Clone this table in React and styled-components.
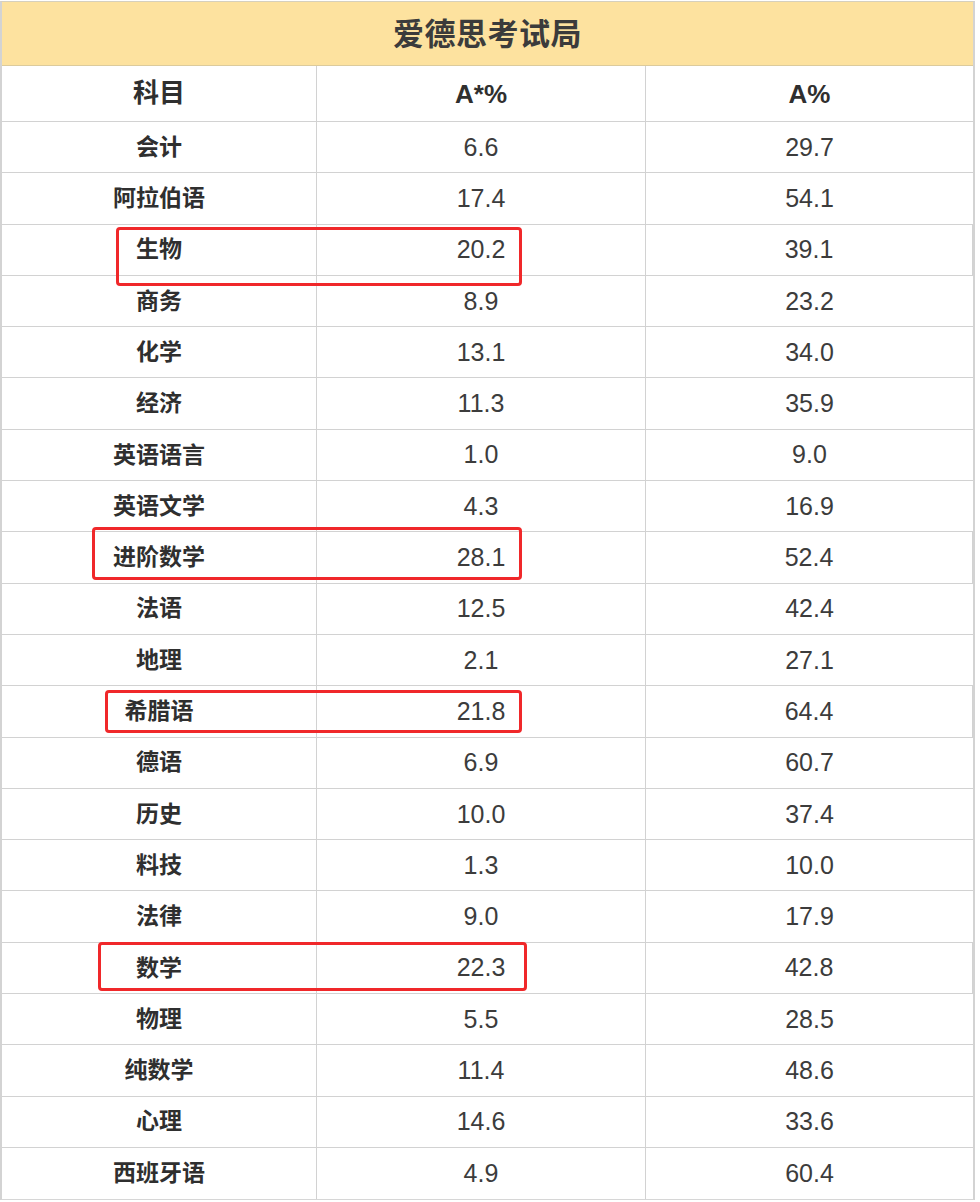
import React from "react";
import styled, { createGlobalStyle } from "styled-components";

const GlobalStyle = createGlobalStyle`
  html, body { margin: 0; padding: 0; background: #ffffff; }
  body { font-family: "Liberation Sans", "Noto Sans CJK SC", sans-serif; }
`;

const Page = styled.div`
  width: 980px;
  padding-top: 1px;
`;

const Table = styled.div`
  width: 971px;
  border-left: 2px solid #d3d3d3;
  border-right: 2px solid #d3d3d3;
  border-top: 1px solid #d6d0bd;
  border-bottom: 1px solid #d6d6d6;
`;

const Title = styled.div`
  height: 64px;
  box-sizing: border-box;
  padding-bottom: 5px;
  background: #fde29f;
  border-bottom: 1px solid #dccb9c;
  display: flex;
  align-items: center;
  justify-content: center;
  font-family: "Noto Sans CJK SC", sans-serif;
  font-weight: 700;
  font-size: 31px;
  line-height: 1;
  color: #3b3b3b;
  letter-spacing: 0.5px;
`;

const Row = styled.div`
  position: relative;
  display: grid;
  grid-template-columns: 315px 329px 327px;
  height: ${(p) => p.$h}px;
  box-sizing: border-box;
  border-bottom: 1px solid #d2d2d2;
  &:last-child { border-bottom: none; }
`;

const Cell = styled.div`
  display: flex;
  align-items: center;
  justify-content: center;
  box-sizing: border-box;
  line-height: 1;
  border-right: 1px solid #d2d2d2;
  &:last-child { border-right: none; }
  padding-bottom: ${(p) => (p.$cjk ? "0.16em" : "0")};
  font-family: ${(p) =>
    p.$cjk ? `"Noto Sans CJK SC", sans-serif` : `"Liberation Sans", "Noto Sans CJK SC", sans-serif`};
  font-weight: ${(p) => (p.$bold ? 700 : 400)};
  font-size: ${(p) => p.$size}px;
  color: ${(p) => (p.$bold ? "#2f2f2f" : "#3c3c3c")};
`;

const Highlight = styled.div`
  position: absolute;
  box-sizing: border-box;
  border: 3px solid #f0282a;
  border-radius: 4px;
  pointer-events: none;
  z-index: 1;
`;

const rows = [
  ["会计", "6.6", "29.7"],
  ["阿拉伯语", "17.4", "54.1"],
  ["生物", "20.2", "39.1"],
  ["商务", "8.9", "23.2"],
  ["化学", "13.1", "34.0"],
  ["经济", "11.3", "35.9"],
  ["英语语言", "1.0", "9.0"],
  ["英语文学", "4.3", "16.9"],
  ["进阶数学", "28.1", "52.4"],
  ["法语", "12.5", "42.4"],
  ["地理", "2.1", "27.1"],
  ["希腊语", "21.8", "64.4"],
  ["德语", "6.9", "60.7"],
  ["历史", "10.0", "37.4"],
  ["料技", "1.3", "10.0"],
  ["法律", "9.0", "17.9"],
  ["数学", "22.3", "42.8"],
  ["物理", "5.5", "28.5"],
  ["纯数学", "11.4", "48.6"],
  ["心理", "14.6", "33.6"],
  ["西班牙语", "4.9", "60.4"],
];

const boxes = {
  2: { left: 114, top: 2.5, width: 406, height: 59 },
  8: { left: 90, top: -5.5, width: 430, height: 53 },
  11: { left: 103, top: 3.5, width: 417, height: 43 },
  16: { left: 96, top: -1, width: 429, height: 49 },
};

export default function App() {
  return (
    <>
      <GlobalStyle />
      <Page>
        <Table>
          <Title>爱德思考试局</Title>
          <Row $h={56}>
            <Cell $bold $cjk $size={26}>科目</Cell>
            <Cell $bold $size={26}>A*%</Cell>
            <Cell $bold $size={26}>A%</Cell>
          </Row>
          {rows.map((r, i) => {
            const b = boxes[i];
            return (
              <Row key={i} $h={51.3}>
                <Cell $bold $cjk $size={23}>{r[0]}</Cell>
                <Cell $size={25}>{r[1]}</Cell>
                <Cell $size={25}>{r[2]}</Cell>
                {b && (
                  <Highlight
                    style={{ left: b.left, top: b.top, width: b.width, height: b.height }}
                  />
                )}
              </Row>
            );
          })}
        </Table>
      </Page>
    </>
  );
}
